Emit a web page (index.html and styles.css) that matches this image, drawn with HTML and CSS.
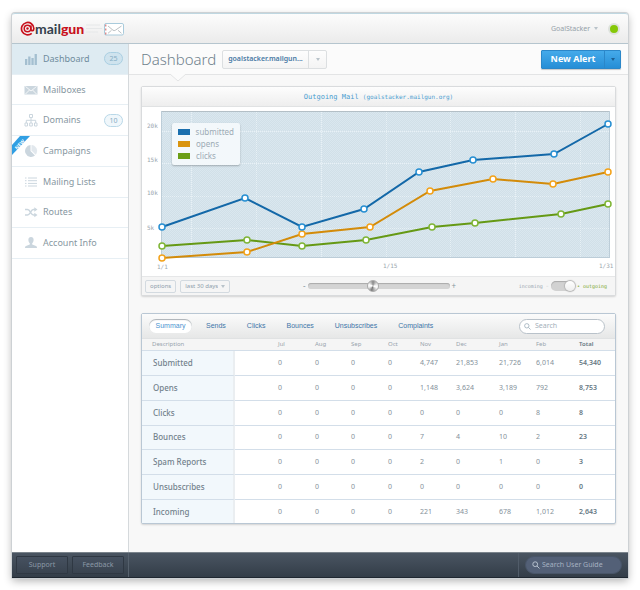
FILE: index.html
```html
<!DOCTYPE html>
<html lang="en">
<head>
<meta charset="utf-8">
<title>Mailgun Dashboard</title>
<link rel="stylesheet" href="styles.css">
</head>
<body>
<div class="window">
  <header class="topbar">
    <a class="logo" href="#">
      <svg class="logo-at" viewBox="0 0 16 16" aria-hidden="true">
        <path d="M12.500 13.200A6.600 6.600 0 1 1 14.800 8c0 2.800-3 3-3.200.6V4.800" fill="none" stroke="#c8101c" stroke-width="1.800"/>
        <circle cx="8" cy="8" r="3.500" fill="none" stroke="#c8101c" stroke-width="1.600"/>
        <circle cx="8" cy="8" r="1.300" fill="#c8101c"/>
      </svg>
      <span class="logo-text">mail<b>gun</b></span>
      <svg class="logo-mail" viewBox="0 0 38 14" aria-hidden="true">
        <path d="M0 3h14M0 6.500h16M0 10h12" stroke="#e6e8e9" fill="none"/>
        <rect x="18.500" y="1.500" width="19" height="11.500" rx="1.500" fill="#fff" stroke="#a9cbdc"/>
        <path d="M19.800 2.500v10" stroke="#cf5a5a" stroke-dasharray="2 2" fill="none"/>
        <path d="M22 4l5 4.200q1.200.8 2.400 0L35.500 4M22 11.300l3.500-3M35.500 11.300L32 8.300" stroke="#aab0b4" fill="none" stroke-width=".8"/>
      </svg>
    </a>
    <button class="account" type="button">GoalStacker <i class="caret"></i></button>
    <span class="status"></span>
  </header>

  <div class="body">
    <nav class="sidebar">
      <a class="item active" href="#">
        <svg viewBox="0 0 14 14"><path d="M1 7h2.300v6H1zM4.200 4.500h2.300V13H4.200zM7.400 6h2.300v7H7.400zM10.600 2h2.300v11h-2.300z"/></svg>
        <span>Dashboard</span><em class="badge">25</em>
      </a>
      <a class="item" href="#">
        <svg viewBox="0 0 14 14"><path d="M.5 3h13v8.500H.5z"/><path d="M1.500 3.500L7 8l5.500-4.500M1.500 11l4-4M12.500 11l-4-4" fill="none" stroke="#fff" stroke-width=".8"/></svg>
        <span>Mailboxes</span>
      </a>
      <a class="item" href="#">
        <svg viewBox="0 0 14 14" class="line"><path d="M5.500 1.500h3v3h-3zM1 10h2.500v3H1zM5.700 10h2.600v3H5.700zM10.500 10H13v3h-2.500zM7 4.500V10M2.300 10V7.300h9.400V10"/></svg>
        <span>Domains</span><em class="badge">10</em>
      </a>
      <a class="item" href="#">
        <svg class="ribbon" viewBox="0 0 18 19"><path d="M8 0h10L0 19V9z" fill="#319fe3"/><text x="0" y="0" transform="translate(5 14) rotate(-46)">NEW</text></svg>
        <svg viewBox="0 0 14 14"><path d="M6.500 1A6 6 0 1 0 11 11.500L6.500 7z"/><path d="M7.500 1v5.600l4.200 4.200A6 6 0 0 0 7.500 1z" opacity=".55"/></svg>
        <span>Campaigns</span>
      </a>
      <a class="item" href="#">
        <svg viewBox="0 0 14 14" class="line"><path d="M1 3h1.500M4 3h9M1 5.700h1.500M4 5.700h9M1 8.400h1.500M4 8.400h9M1 11h1.500M4 11h9"/></svg>
        <span>Mailing Lists</span>
      </a>
      <a class="item" href="#">
        <svg viewBox="0 0 14 14"><path d="M1 4.500h2.500c3 0 3 5.500 6 5.500H11M1 10h2.500c3 0 3-5.500 6-5.500H11" fill="none" stroke="#cbd6de" stroke-width="1.500"/><path d="M10.300 2.200L13.500 4.500l-3.200 2.300zM10.300 7.700l3.200 2.300-3.200 2.300z"/></svg>
        <span>Routes</span>
      </a>
      <a class="item" href="#">
        <svg viewBox="0 0 14 14"><path d="M7 1C5 1 4.200 2.400 4.400 4.200c.1 1.400.7 2.400 1.400 3v1.300L2 10c-.7.4-1 1-1 2h12c0-1-.3-1.600-1-2L8.200 8.500V7.200c.7-.6 1.300-1.600 1.400-3C9.800 2.400 9 1 7 1z"/></svg>
        <span>Account Info</span>
      </a>
    </nav>

    <main class="main">
      <div class="titlebar">
        <h1>Dashboard</h1>
        <div class="domain">
          <select aria-label="Domain"><option>goalstacker.mailgun...</option></select>
          <span class="domain-arrow"><i class="caret"></i></span>
        </div>
        <div class="split">
          <button class="new-alert" type="button">New Alert</button>
          <button class="more" type="button" aria-label="More"><i class="caret"></i></button>
        </div>
        <svg class="notch" viewBox="0 0 16 8" aria-hidden="true"><path d="M0 0l8 7 8-7" fill="#fbfbfb" stroke="#e3e4e5"/></svg>
      </div>

      <section class="panel chart-panel">
        <h2>Outgoing Mail <small>(goalstacker.mailgun.org)</small></h2>
        <div class="chart">
          <svg viewBox="0 0 473 169" role="img" aria-label="Outgoing mail from 1/1 to 1/31">
            <defs>
              <pattern id="weave" width="2" height="2" patternUnits="userSpaceOnUse"><rect width="2" height="2" fill="#dae7ef"/><path d="M0 0h1v1H0zM1 1h1v1H1z" fill="#d1e0e8"/></pattern>
            </defs>
            <rect x="19" y="4" width="449" height="147" fill="url(#weave)"/>
            <path d="M19 4.500h449" stroke="#b3bfc6"/>
            <path d="M19.500 4v147M467.500 4v147M19 150.500h449" stroke="#bccdd8" fill="none"/>
            <path d="M49.500 5v146M114.500 5v146M179.500 5v146M244.500 5v146M308.500 5v146M373.500 5v146M438.500 5v146M20 24.500h448M20 56.500h448M20 89.500h448M20 121.500h448" stroke="#e8f1f6" stroke-dasharray="1 1" fill="none"/>
            <g class="axis">
              <text x="5" y="21">20k</text><text x="5" y="55">15k</text><text x="5" y="88">10k</text><text x="5" y="123">5k</text>
              <text x="15" y="162">1/1</text><text x="241" y="161">1/15</text><text x="457" y="161">1/31</text>
            </g>
            <g class="clicks"><polyline points="20,139 105,133 160,139 224,133 290,120 333,116 419,107 466,97"/>
              <circle cx="20" cy="139" r="3"/><circle cx="105" cy="133" r="3"/><circle cx="160" cy="139" r="3"/><circle cx="224" cy="133" r="3"/><circle cx="290" cy="120" r="3"/><circle cx="333" cy="116" r="3"/><circle cx="419" cy="107" r="3"/><circle cx="466" cy="97" r="3"/></g>
            <g class="opens"><polyline points="20,151 105,145 160,127 228,120 288,84 351,72 411,77 466,65"/>
              <circle cx="20" cy="151" r="3"/><circle cx="105" cy="145" r="3"/><circle cx="160" cy="127" r="3"/><circle cx="228" cy="120" r="3"/><circle cx="288" cy="84" r="3"/><circle cx="351" cy="72" r="3"/><circle cx="411" cy="77" r="3"/><circle cx="466" cy="65" r="3"/></g>
            <g class="submitted"><polyline points="20,120 103,91 160,120 222,102 277,65 331,53 412,47 466,17"/>
              <circle cx="20" cy="120" r="3"/><circle cx="103" cy="91" r="3"/><circle cx="160" cy="120" r="3"/><circle cx="222" cy="102" r="3"/><circle cx="277" cy="65" r="3"/><circle cx="331" cy="53" r="3"/><circle cx="412" cy="47" r="3"/><circle cx="466" cy="17" r="3"/></g>
          </svg>
          <ul class="legend">
            <li><i class="swatch blue"></i>submitted</li>
            <li><i class="swatch orange"></i>opens</li>
            <li><i class="swatch green"></i>clicks</li>
          </ul>
        </div>
        <div class="controls">
          <button type="button" class="mini">options</button>
          <span class="mini period"><select aria-label="Period"><option>last 30 days</option></select><i class="caret"></i></span>
          <div class="zoom"><span>-</span><input type="range" min="0" max="100" value="46" aria-label="Zoom"><span>+</span></div>
          <label class="direction"><span>incoming ◦</span><input type="checkbox" checked><span class="on">• outgoing</span></label>
        </div>
      </section>

      <section class="panel stats">
        <div class="tabs">
          <button type="button" class="tab current">Summary</button>
          <button type="button" class="tab">Sends</button>
          <button type="button" class="tab">Clicks</button>
          <button type="button" class="tab">Bounces</button>
          <button type="button" class="tab">Unsubscribes</button>
          <button type="button" class="tab">Complaints</button>
          <label class="search"><svg viewBox="0 0 8 8"><circle cx="3.200" cy="3.200" r="2.500"/><path d="M5 5l2.500 2.500"/></svg><input type="text" placeholder="Search" aria-label="Search"></label>
        </div>
        <table>
          <colgroup><col class="c-desc"><col class="c-jul"><col class="c-aug"><col class="c-sep"><col class="c-oct"><col class="c-nov"><col class="c-dec"><col class="c-jan"><col class="c-feb"><col class="c-total"></colgroup>
          <thead><tr><th>Description</th><th>Jul</th><th>Aug</th><th>Sep</th><th>Oct</th><th>Nov</th><th>Dec</th><th>Jan</th><th>Feb</th><th>Total</th></tr></thead>
          <tbody>
            <tr><th scope="row">Submitted</th><td>0</td><td>0</td><td>0</td><td>0</td><td>4,747</td><td>21,853</td><td>21,726</td><td>6,014</td><td>54,340</td></tr>
            <tr><th scope="row">Opens</th><td>0</td><td>0</td><td>0</td><td>0</td><td>1,148</td><td>3,624</td><td>3,189</td><td>792</td><td>8,753</td></tr>
            <tr><th scope="row">Clicks</th><td>0</td><td>0</td><td>0</td><td>0</td><td>0</td><td>0</td><td>0</td><td>8</td><td>8</td></tr>
            <tr><th scope="row">Bounces</th><td>0</td><td>0</td><td>0</td><td>0</td><td>7</td><td>4</td><td>10</td><td>2</td><td>23</td></tr>
            <tr><th scope="row">Spam Reports</th><td>0</td><td>0</td><td>0</td><td>0</td><td>2</td><td>0</td><td>1</td><td>0</td><td>3</td></tr>
            <tr><th scope="row">Unsubscribes</th><td>0</td><td>0</td><td>0</td><td>0</td><td>0</td><td>0</td><td>0</td><td>0</td><td>0</td></tr>
            <tr><th scope="row">Incoming</th><td>0</td><td>0</td><td>0</td><td>0</td><td>221</td><td>343</td><td>678</td><td>1,012</td><td>2,643</td></tr>
          </tbody>
        </table>
      </section>
    </main>
  </div>

  <footer class="footer">
    <div class="footer-links"><a href="#">Support</a><a href="#">Feedback</a></div>
    <div class="guide"><label class="guide-search"><svg viewBox="0 0 8 8"><circle cx="3.200" cy="3.200" r="2.400"/><path d="M5 5l2.500 2.500"/></svg><input type="text" placeholder="Search User Guide" aria-label="Search User Guide"></label></div>
  </footer>
</div>
</body>
</html>
```
FILE: styles.css
```css
* { box-sizing: border-box; }
body {
  margin: 0;
  padding: 13px 12px 12px;
  min-height: 100vh;
  display: flex;
  background: #fff;
  font: 8px/12px "Noto Sans", sans-serif;
  color: #8797a1;
}
button, input, select { font: inherit; color: inherit; margin: 0; padding: 0; border: 0; background: none; outline: 0; }
select { appearance: none; }
a { color: inherit; text-decoration: none; }
h1, h2, ul { margin: 0; padding: 0; font-weight: 400; }

.window {
  flex: 1;
  min-width: 0;
  display: flex;
  flex-direction: column;
  border-radius: 3px 3px 1px 1px;
  box-shadow: 0 0 0 1px #cdd1d4, 0 3px 8px rgba(0, 0, 0, .3);
  background: #f8f8f8;
}
.caret {
  display: inline-block;
  border: 2px solid transparent;
  border-top: 3px solid #b9c3ca;
  border-bottom: 0;
  vertical-align: middle;
}

.topbar {
  height: 31px;
  display: flex;
  align-items: center;
  padding: 0 8px;
  border-top: 1px solid #bfd7e1;
  border-bottom: 1px solid #b5c5ce;
  border-radius: 3px 3px 0 0;
  background: linear-gradient(#fcfcfc, #ebebeb);
}
.logo { display: flex; align-items: center; }
.logo-at { width: 15px; height: 15px; }
.logo-text { font: 700 14px/16px Lato, sans-serif; color: #34414c; }
.logo-text b { color: #c8101c; }
.logo-mail { width: 38px; height: 14px; margin-left: 2px; }
.account { margin-left: auto; font-size: 7px; color: #95a1a9; }
.account .caret { margin-left: 2px; }
.status {
  width: 12px;
  height: 12px;
  margin-left: 10px;
  border: 2px solid #dde2dc;
  border-radius: 50%;
  background: #85c808;
}

.body {
  flex: 1;
  display: flex;
  background: linear-gradient(to right, #fff 116px, #d5d9dc 116px, #d5d9dc 117px, #f8f8f8 117px);
}
.sidebar {
  width: 117px;
  flex: none;
  background: #fff;
  border-right: 1px solid #d5d9dc;
  display: grid;
  grid-template-rows: repeat(7, 1fr);
  height: 215px;
}
.item {
  position: relative;
  display: flex;
  align-items: center;
  gap: 5px;
  padding: 0 5px 0 12px;
  border-bottom: 1px solid #e7eff4;
  font-size: 9px;
}
.item.active { background: #deebf2; color: #6f8c9d; }
.item svg { width: 14px; height: 14px; fill: #cbd6de; }
.item.active svg { fill: #a4bfd0; }
.item svg.line { fill: none; stroke: #cbd6de; }
.item svg.ribbon { position: absolute; left: 0; top: 0; width: 18px; height: 19px; }
.ribbon text { font: 700 5px "Noto Sans", sans-serif; fill: #fff; }
.badge {
  margin-left: auto;
  width: 19px;
  border: 1px solid #b9d8e8;
  border-radius: 7px;
  background: #f0f7fb;
  font: 7px/11px "Noto Sans", sans-serif;
  text-align: center;
  color: #86adc3;
}
.active .badge { background: #cfe3ee; border-color: #aacfe2; }

.main { flex: 1; min-width: 0; padding: 0 12px 28px 12px; }
.titlebar {
  position: relative;
  height: 31px;
  margin: 0 -12px 11px;
  padding: 0 7px 0 12px;
  display: flex;
  align-items: center;
  border-bottom: 1px solid #e3e4e5;
  background: #fbfbfb;
}
.notch { position: absolute; left: 41px; top: 30px; width: 16px; height: 8px; }
h1 { font-size: 15px; line-height: 20px; font-weight: 300; color: #6f818c; }
.domain {
  display: flex;
  margin-left: 6px;
  width: 105px;
  height: 19px;
  border: 1px solid #dcdfe1;
  border-radius: 2px;
  background: linear-gradient(#fdfdfd, #f4f4f4);
}
.domain select { flex: 1; min-width: 0; padding-left: 5px; font-size: 7px; font-weight: 600; color: #4a7aa5; }
.domain-arrow { width: 18px; border-left: 1px solid #dcdfe1; line-height: 16px; text-align: center; }
.split {
  margin-left: auto;
  display: flex;
  width: 80px;
  height: 19px;
  border: 1px solid #2b87c9;
  border-radius: 1px;
  background: linear-gradient(#45aaea, #268ed6);
  box-shadow: 0 1px 1px rgba(0, 0, 0, .2);
}
.new-alert { flex: 1; font-size: 9px; font-weight: 700; color: #fff; }
.more { width: 16px; border-left: 1px solid #2b87c9; }
.more .caret { border-top-color: #1a5f93; }

.panel {
  border: 1px solid #d9dbdd;
  border-radius: 2px;
  background: #fff;
  box-shadow: 0 1px 2px rgba(0, 0, 0, .15);
}
h2 {
  height: 20px;
  text-align: center;
  font: 7px/19px "DejaVu Sans Mono", monospace;
  color: #4a9dd0;
  background: linear-gradient(#fdfdfd, #eee);
  border-bottom: 1px solid #e0e2e3;
}
h2 small { font-size: 6px; }
.chart { position: relative; }
.chart > svg { display: block; width: 100%; }
.axis text { font: 6px "DejaVu Sans Mono", monospace; fill: #9aa6ae; }
.chart polyline { fill: none; stroke-width: 2; }
.chart circle { fill: #fff; stroke-width: 1.5; }
.submitted { stroke: #1368a8; }
.submitted circle { stroke: #278fd2; }
.opens { stroke: #d38b09; }
.opens circle { stroke: #f3a21a; }
.clicks { stroke: #659914; }
.clicks circle { stroke: #7fb536; }
.legend {
  position: absolute;
  left: 30px;
  top: 16px;
  width: 68px;
  padding: 3px 6px;
  list-style: none;
  border-radius: 2px;
  background: #f3f8fb;
  box-shadow: 0 1px 2px rgba(0, 0, 0, .25);
  color: #9dabb5;
}
.legend li { display: flex; align-items: center; gap: 6px; }
.swatch { width: 12px; height: 6px; }
.swatch.blue { background: #1b6fae; }
.swatch.orange { background: #d9940f; }
.swatch.green { background: #6b9e17; }
.controls {
  height: 19px;
  display: flex;
  align-items: center;
  padding: 0 8px 0 3px;
  border-top: 1px solid #e6e7e8;
  background: #f5f5f5;
}
.mini {
  height: 13px;
  padding: 0 4px;
  border: 1px solid #d3dae0;
  border-radius: 2px;
  font-size: 6px;
  line-height: 11px;
  color: #8fa0ac;
}
.period { margin-left: 4px; display: flex; align-items: center; gap: 3px; }
.zoom { display: flex; align-items: center; gap: 2px; margin: 0 auto; padding-left: 10px; }
.zoom input {
  appearance: none;
  width: 142px;
  height: 6px;
  border-radius: 3px;
  background: #d4d4d4;
  box-shadow: inset 0 1px 1px #aaa;
}
.zoom input::-webkit-slider-thumb {
  appearance: none;
  width: 12px;
  height: 12px;
  border: 1px solid #aaa;
  border-radius: 50%;
  background: conic-gradient(#888, #eee 20%, #fff 30%, #999 50%, #777 55%, #eee 70%, #fff 80%, #888);
}
.direction { display: flex; align-items: center; gap: 2px; font: 5px/8px "DejaVu Sans Mono", monospace; color: #9aa6ae; }
.direction .on { color: #7aa62c; }
.direction input {
  appearance: none;
  flex: none;
  margin: 0;
  width: 24px;
  height: 10px;
  border-radius: 5px;
  background: #d2d2d2;
  box-shadow: inset 0 1px 1px #aaa;
  display: flex;
  align-items: center;
  justify-content: flex-end;
}
.direction input::before {
  content: "";
  width: 10px;
  height: 10px;
  border-radius: 50%;
  background: linear-gradient(#fff, #eee);
  box-shadow: 0 0 1px 1px #b5b5b5;
}

.stats { margin-top: 17px; border-color: #b9c7d4; }
.tabs {
  height: 25px;
  display: flex;
  align-items: center;
  padding: 0 10px 0 7px;
  background: linear-gradient(#fbfbfb, #e6e7e7);
  border-bottom: 1px solid #e0e2e3;
}
.tab { height: 14px; margin-right: 21px; font: 7px/14px "Liberation Sans", sans-serif; color: #3d75a8; }
.tab.current {
  width: 43px;
  margin-right: 14px;
  border-radius: 7px;
  background: #fff;
  box-shadow: inset 0 1px 1px #aab0b5;
  color: #4b94cf;
}
.search {
  margin-left: auto;
  width: 86px;
  height: 15px;
  display: flex;
  align-items: center;
  gap: 4px;
  padding: 0 4px;
  border: 1px solid #b9c2ca;
  border-radius: 8px;
  background: #fff;
  font-size: 7px;
}
.tab:nth-child(6) { margin-right: 0; }
.search svg, .guide-search svg { width: 8px; height: 8px; flex: none; fill: none; stroke: #a4b3bf; }
.search svg { width: 7px; height: 7px; }
.search input, .guide-search input { width: 100%; min-width: 0; }
.search input::placeholder { color: #a4b0ba; }

table { width: 100%; height: 184px; table-layout: fixed; border-collapse: separate; border-spacing: 0; }
.c-desc { width: 93px; }
.c-jul { width: 80px; }
.c-aug { width: 36px; }
.c-sep { width: 37px; }
.c-oct { width: 32px; }
.c-nov { width: 36px; }
.c-dec { width: 43px; }
.c-jan { width: 37px; }
.c-feb { width: 43px; }
.c-total { width: 36px; }
th, td { padding: 0; text-align: left; font-weight: 400; border-bottom: 1px solid #d3dee9; white-space: nowrap; }
thead th { height: 12px; line-height: 11px; font-size: 6px; color: #98a4ad; background: #f5f5f5; }
thead th:first-child { padding-left: 10px; }
th:nth-child(2), td:nth-child(2) { padding-left: 43px; }
td { font-size: 7px; line-height: 12px; color: #83919a; }
tbody th { padding-left: 11px; font-size: 8px; line-height: 12px; font-weight: 500; color: #72828c; background: #f2f8fc; border-right: 2px solid #eaeef1; }
tbody tr:last-child > * { border-bottom: 0; }
th:last-child, td:last-child { font-weight: 600; color: #667883; }
tbody th:last-child { font-weight: 500; }

.footer {
  height: 26px;
  display: flex;
  justify-content: space-between;
  border-top: 1px solid #7b848c;
  border-bottom: 1px solid #1f2730;
  background: linear-gradient(#4a5562, #333d48);
}
.footer-links { display: flex; align-items: center; gap: 4px; width: 117px; padding: 0 4px; border-right: 1px solid #56616d; }
.footer-links a {
  flex: 1;
  height: 18px;
  border: 1px solid #2f3843;
  border-radius: 1px;
  background: linear-gradient(#465160, #39434f);
  font-size: 7px;
  line-height: 16px;
  text-align: center;
  color: #8b98a6;
}
.guide { display: flex; align-items: center; padding: 0 6px; border-left: 1px solid #515c69; }
.guide-search {
  width: 97px;
  height: 18px;
  display: flex;
  align-items: center;
  gap: 2px;
  padding: 0 6px;
  border: 1px solid #485568;
  border-radius: 9px;
  background: #536077;
  font-size: 7px;
}
.guide-search svg { stroke: #b5c0cd; }
.guide-search input::placeholder { color: #a5b1c1; }
```
